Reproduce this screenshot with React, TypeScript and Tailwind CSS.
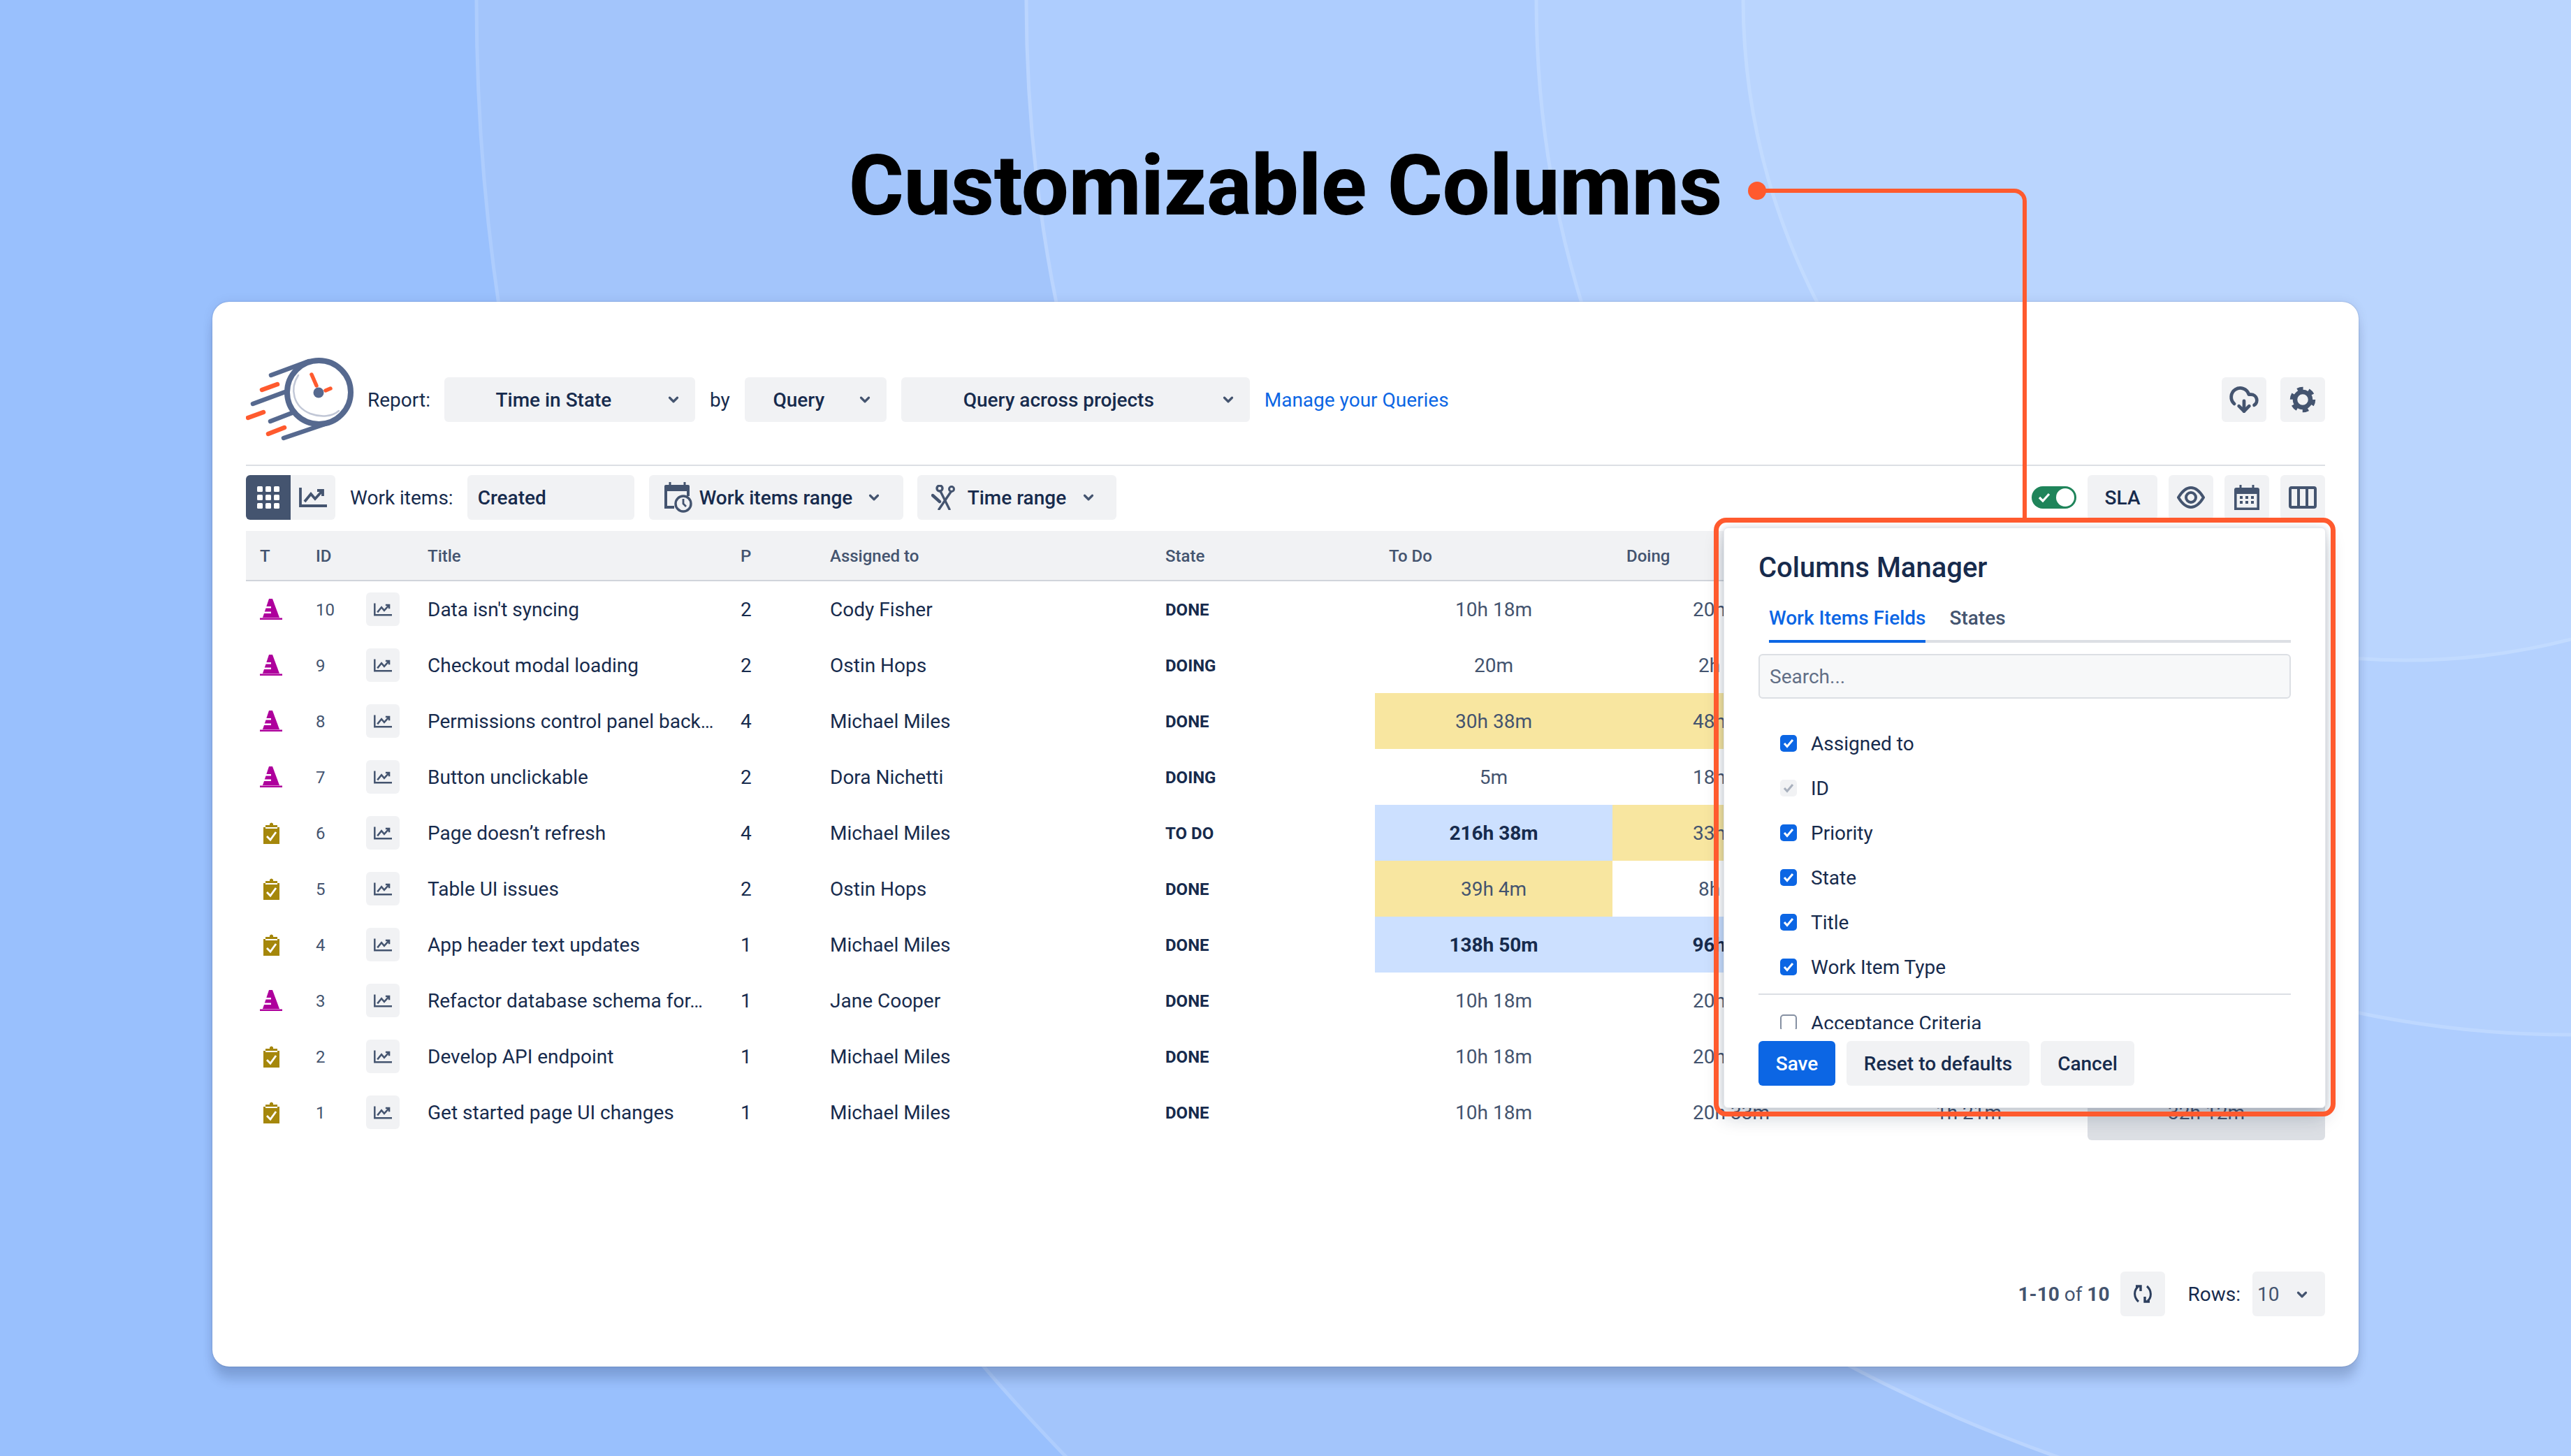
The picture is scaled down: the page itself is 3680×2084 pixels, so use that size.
import { ChevronDown, CloudDownload } from 'lucide-react';

interface Row {
  id: number;
  type: 'bug' | 'task';
  title: string;
  priority: number;
  assignee: string;
  state: string;
  toDo: string;
  doing: string;
  toDoTone?: 'yellow' | 'blue';
  doingTone?: 'yellow' | 'blue';
}

const rows: Row[] = [
  { id: 10, type: 'bug', title: "Data isn't syncing", priority: 2, assignee: 'Cody Fisher', state: 'DONE', toDo: '10h 18m', doing: '20h 33m' },
  { id: 9, type: 'bug', title: 'Checkout modal loading', priority: 2, assignee: 'Ostin Hops', state: 'DOING', toDo: '20m', doing: '2h 33m' },
  { id: 8, type: 'bug', title: 'Permissions control panel back…', priority: 4, assignee: 'Michael Miles', state: 'DONE', toDo: '30h 38m', doing: '48h 33m', toDoTone: 'yellow', doingTone: 'yellow' },
  { id: 7, type: 'bug', title: 'Button unclickable', priority: 2, assignee: 'Dora Nichetti', state: 'DOING', toDo: '5m', doing: '18h 33m' },
  { id: 6, type: 'task', title: 'Page doesn’t refresh', priority: 4, assignee: 'Michael Miles', state: 'TO DO', toDo: '216h 38m', doing: '33h 33m', toDoTone: 'blue', doingTone: 'yellow' },
  { id: 5, type: 'task', title: 'Table UI issues', priority: 2, assignee: 'Ostin Hops', state: 'DONE', toDo: '39h 4m', doing: '8h 33m', toDoTone: 'yellow' },
  { id: 4, type: 'task', title: 'App header text updates', priority: 1, assignee: 'Michael Miles', state: 'DONE', toDo: '138h 50m', doing: '96h 33m', toDoTone: 'blue', doingTone: 'blue' },
  { id: 3, type: 'bug', title: 'Refactor database schema for…', priority: 1, assignee: 'Jane Cooper', state: 'DONE', toDo: '10h 18m', doing: '20h 33m' },
  { id: 2, type: 'task', title: 'Develop API endpoint', priority: 1, assignee: 'Michael Miles', state: 'DONE', toDo: '10h 18m', doing: '20h 33m' },
  { id: 1, type: 'task', title: 'Get started page UI changes', priority: 1, assignee: 'Michael Miles', state: 'DONE', toDo: '10h 18m', doing: '20h 33m' },
];

const fields = [
  { label: 'Assigned to', mode: 'on' },
  { label: 'ID', mode: 'locked' },
  { label: 'Priority', mode: 'on' },
  { label: 'State', mode: 'on' },
  { label: 'Title', mode: 'on' },
  { label: 'Work Item Type', mode: 'on' },
];

const gridCols = 'grid grid-cols-[80px_72px_88px_448px_128px_480px_320px_340px_340px_340px_340px]';

function toneClass(tone?: 'yellow' | 'blue') {
  if (tone === 'yellow') return 'bg-[#f8e6a0] text-[#44546f]';
  if (tone === 'blue') return 'bg-[#cce0ff] text-[#172b4d] font-bold';
  return 'text-[#44546f]';
}

function Logo() {
  return (
    <svg width="154" height="120" viewBox="0 0 154 120" fill="none" strokeLinecap="round">
      <g stroke="#56698f" strokeWidth="6.5">
        <path d="M36 25 L90 5" />
        <path d="M10 66 L56 49" />
        <path d="M35 91 L66 79" />
        <path d="M54 115 L116 94" />
      </g>
      <g stroke="#ff5a2e" strokeWidth="6.5">
        <path d="M23 46 L45 38" />
        <path d="M3 86 L25 78" />
        <path d="M32 109 L55 100" />
      </g>
      <circle cx="104.5" cy="49.5" r="45.5" fill="#fff" stroke="#56698f" strokeWidth="8" />
      <path d="M75 25 C62 45 68 70 92 80 C108 86 124 84 133 76" stroke="#c1c7d6" strokeWidth="2.5" />
      <path d="M94 24 L101 40" stroke="#ff5a2e" strokeWidth="5.5" />
      <path d="M114 47 L121 44" stroke="#ff5a2e" strokeWidth="5.5" />
      <circle cx="104" cy="50" r="7.5" fill="#56698f" />
    </svg>
  );
}

function TrendIcon({ className }: { className: string }) {
  return (
    <svg className={className} viewBox="0 0 40 28" fill="none" stroke="#44546f" strokeWidth="3.8">
      <path d="M2 0 V26 H40" />
      <path d="M8 20 L17 9 L23 16 L33 5" />
      <path d="M26 4 H34 V12" />
    </svg>
  );
}

function DotsIcon() {
  return (
    <svg width="32" height="32" viewBox="0 0 32 32" fill="#fff">
      {[0, 12, 24].map((y) =>
        [0, 12, 24].map((x) => <rect key={`${x}-${y}`} x={x} y={y} width="8" height="8" rx="1.5" />)
      )}
    </svg>
  );
}

function CalendarClockIcon() {
  return (
    <svg width="40" height="44" viewBox="0 0 40 44" fill="none">
      <path d="M8 0 V6 M29 0 V6" stroke="#44546f" strokeWidth="3" />
      <path d="M2 4 H34 Q36 4 36 6 V13 H0 V6 Q0 4 2 4 Z" fill="#44546f" />
      <path d="M2 12 V36 H14" stroke="#44546f" strokeWidth="4" />
      <path d="M34 12 V20" stroke="#44546f" strokeWidth="4" />
      <circle cx="27" cy="31" r="11" fill="#f1f2f4" stroke="#44546f" strokeWidth="3.4" />
      <path d="M27 24 V31 L31 35" stroke="#44546f" strokeWidth="2.8" />
    </svg>
  );
}

function ToolsIcon() {
  return (
    <svg width="35" height="36" viewBox="0 0 35 36" fill="none" stroke="#44546f" strokeWidth="3.4" strokeLinecap="round">
      <circle cx="12" cy="5" r="4" />
      <circle cx="29" cy="6" r="3.5" strokeWidth="3" />
      <path d="M13 9 L26 35" />
      <path d="M28 10 L11 35" />
      <path d="M2 15 L12 24" strokeWidth="4.4" />
    </svg>
  );
}

function GearIcon() {
  return (
    <svg width="38" height="38" viewBox="0 0 38 38" fill="none" stroke="#44546f">
      <circle cx="19" cy="19" r="11" strokeWidth="6.5" />
      <circle cx="19" cy="19" r="15.5" strokeWidth="5.5" strokeDasharray="8.2 8.03" />
    </svg>
  );
}

function EyeIcon() {
  return (
    <svg width="40" height="32" viewBox="0 0 40 32" fill="none" stroke="#44546f">
      <path d="M2 16 C8 6 14 2 20 2 C26 2 32 6 38 16 C32 26 26 30 20 30 C14 30 8 26 2 16 Z" strokeWidth="4" />
      <circle cx="20" cy="16" r="7" strokeWidth="4" />
    </svg>
  );
}

function CalendarIcon() {
  return (
    <svg width="36" height="36" viewBox="0 0 36 36" fill="none">
      <path d="M9 0 V6 M27 0 V6" stroke="#44546f" strokeWidth="3" />
      <path d="M3 4 H33 Q36 4 36 7 V13 H0 V7 Q0 4 3 4 Z" fill="#44546f" />
      <path d="M1.800 11 V34.200 H34.200 V11" stroke="#44546f" strokeWidth="3.6" />
      <g fill="#44546f">
        {[16, 23].map((y) => [8, 16, 24].map((x) => <rect key={`${x}-${y}`} x={x} y={y} width="4" height="4" />))}
      </g>
    </svg>
  );
}

function ColumnsIcon() {
  return (
    <svg width="40" height="32" viewBox="0 0 40 32" fill="none" stroke="#44546f" strokeWidth="4">
      <rect x="2" y="2" width="36" height="28" rx="2" />
      <path d="M14 2 V30 M26 2 V30" />
    </svg>
  );
}

function BugCone() {
  return (
    <svg width="32" height="30" viewBox="0 0 32 30">
      <path d="M13 0 H18 L28 27 H4 Z" fill="#ae009c" />
      <rect x="0" y="27.500" width="32" height="2.500" fill="#ae009c" />
      <rect x="8" y="11" width="8" height="2.500" fill="#fff" />
      <rect x="6" y="18.500" width="10" height="2.500" fill="#fff" />
    </svg>
  );
}

function TaskClip() {
  return (
    <svg width="23" height="31" viewBox="0 0 23 31">
      <path d="M9 4 V2 Q11.500 -1 14 2 V4 H20 V7 H23 V31 H0 V7 H3 V4 Z" fill="#a5870b" />
      <rect x="3" y="7" width="17" height="2" fill="#fff" />
      <path d="M5 20 L10 25 L18 14" fill="none" stroke="#fff" strokeWidth="2.800" />
    </svg>
  );
}

function RefreshIcon() {
  return (
    <svg width="26" height="26" viewBox="0 0 26 26" fill="none" stroke="#2c3e5d" strokeWidth="3">
      <path d="M6 3 C0 8 0 18 7 24" />
      <path d="M20 23 C26 18 26 8 19 2" />
      <path d="M3 2 H10 V9" strokeWidth="3.4" />
      <path d="M23 24 H16 V17" strokeWidth="3.4" />
    </svg>
  );
}

function Field({ label, mode }: { label: string; mode: string }) {
  return (
    <div className="flex h-16 shrink-0 items-center gap-5 pl-[31px] text-[28px] text-[#172b4d]">
      {mode === 'off' ? (
        <span className="h-6 w-6 rounded-[5px] border-2 border-[#8590a2]" />
      ) : (
        <span className={`flex h-6 w-6 items-center justify-center rounded-[5px] ${mode === 'on' ? 'bg-[#0c66e4]' : 'bg-[#f1f2f4]'}`}>
          <svg width="16" height="14" viewBox="0 0 16 14" fill="none" stroke={mode === 'on' ? '#fff' : '#a8b0bd'} strokeWidth="3">
            <path d="M2 7 L6 11.500 L14 2" />
          </svg>
        </span>
      )}
      <span className="pt-[2px]">{label}</span>
    </div>
  );
}

function ColumnsManager() {
  return (
    <div className="absolute left-[2163px] top-[323px] flex h-[831px] w-[862px] flex-col rounded-[6px] border border-[#e6e8ec] bg-white px-[49px] pt-[32px] shadow-[0_12px_28px_rgba(9,30,66,0.22),0_0_6px_rgba(9,30,66,0.12)]">
      <h2 className="h-12 pt-[1px] text-[40px] leading-[48px] font-medium text-[#172b4d]">Columns Manager</h2>
      <div className="mt-4 ml-[15px] flex h-[68px] gap-[34px] border-b-4 border-[#dcdfe4] text-[28px] font-medium">
        <span className="-mb-1 h-[68px] border-b-4 border-[#0c66e4] pt-[14px] leading-[38px] text-[#0c66e4]">Work Items Fields</span>
        <span className="pt-[14px] leading-[38px] text-[#44546f]">States</span>
      </div>
      <div className="mt-4 flex h-16 shrink-0 items-center rounded-[6px] border-2 border-[#dcdfe4] bg-[#f7f8f9] px-[14px] pt-[2px] text-[28px] text-[#626f86]">Search...</div>
      <div className="mt-8 h-[441px] shrink-0 overflow-hidden">
        {fields.map((f) => (
          <Field key={f.label} label={f.label} mode={f.mode} />
        ))}
        <div className="mt-[6px] mb-2 h-[2px] bg-[#dcdfe4]" />
        <Field label="Acceptance Criteria" mode="off" />
      </div>
      <div className="mt-[17px] flex gap-4 text-[28px] font-medium">
        <button className="flex h-16 w-[110px] items-center justify-center rounded-[6px] bg-[#0c66e4] pt-[2px] text-white">Save</button>
        <button className="flex h-16 w-[262px] items-center justify-center rounded-[6px] bg-[#f1f2f4] pt-[2px] text-[#172b4d]">Reset to defaults</button>
        <button className="flex h-16 w-[134px] items-center justify-center rounded-[6px] bg-[#f1f2f4] pt-[2px] text-[#172b4d]">Cancel</button>
      </div>
    </div>
  );
}

export default function App() {
  return (
    <div className="relative h-[2084px] w-[3680px] overflow-hidden bg-[#99c0fd] font-[Roboto,sans-serif] text-[#172b4d]">
      <svg className="absolute inset-0" width="3680" height="2084" viewBox="0 0 3680 2084" fill="none">
        <circle cx="3680" cy="0" r="2998" fill="#a3c5fb" stroke="#aecdfd" strokeWidth="5" />
        <circle cx="3680" cy="0" r="2211" fill="#aecdfe" stroke="#bbd5fe" strokeWidth="5" />
        <circle cx="3680" cy="0" r="1481" fill="#b4d1fe" stroke="#bed8ff" strokeWidth="5" />
        <circle cx="3443" cy="-3" r="948" fill="#bad5fe" stroke="#c2dbff" strokeWidth="5" />
      </svg>

      <div className="relative flex h-[432px] justify-center pt-[198px]">
        <h1 className="text-[120px] leading-[136px] font-extrabold text-black">Customizable Columns</h1>
      </div>

      <div className="relative ml-[304px] h-[1524px] w-[3072px] rounded-[24px] bg-white px-[48px] pt-[80px] shadow-[0_20px_16px_-2px_rgba(9,30,66,0.18),0_0_16px_rgba(9,30,66,0.08),0_0_2px_rgba(9,30,66,0.25)]">
        <div className="flex h-[120px] items-center text-[28px]">
          <Logo />
          <span className="ml-5 pt-[2px]">Report:</span>
          <div className="ml-5 flex h-16 w-[359px] items-center rounded-[6px] bg-[#f1f2f4] pr-5 font-medium">
            <span className="flex-1 pt-[2px] pr-1 text-center">Time in State</span>
            <ChevronDown size={22} strokeWidth={3.5} color="#44546f" />
          </div>
          <span className="ml-[21px] pt-[2px]">by</span>
          <div className="ml-[21px] flex h-16 w-[203px] items-center rounded-[6px] bg-[#f1f2f4] pr-5 font-medium">
            <span className="flex-1 pt-[2px] pr-[6px] text-center">Query</span>
            <ChevronDown size={22} strokeWidth={3.5} color="#44546f" />
          </div>
          <div className="ml-[21px] flex h-16 w-[499px] items-center rounded-[6px] bg-[#f1f2f4] pr-5 font-medium">
            <span className="flex-1 pt-[2px] pr-[6px] text-center">Query across projects</span>
            <ChevronDown size={22} strokeWidth={3.5} color="#44546f" />
          </div>
          <a className="ml-[21px] pt-[2px] text-[#0c66e4]">Manage your Queries</a>
          <div className="ml-auto flex gap-5">
            <div className="flex h-16 w-16 items-center justify-center rounded-[6px] bg-[#f1f2f4]">
              <CloudDownload size={44} strokeWidth={2.6} color="#44546f" />
            </div>
            <div className="flex h-16 w-16 items-center justify-center rounded-[6px] bg-[#f1f2f4]">
              <GearIcon />
            </div>
          </div>
        </div>

        <div className="mt-[33px] h-[2px] bg-[#dcdfe4]" />

        <div className="mt-[13px] flex h-16 items-center text-[28px]">
          <div className="flex h-16 w-16 items-center justify-center rounded-l-[6px] bg-[#44546f]">
            <DotsIcon />
          </div>
          <div className="flex h-16 w-16 items-center justify-center rounded-r-[6px] bg-[#f1f2f4]">
            <TrendIcon className="h-7 w-10" />
          </div>
          <span className="ml-[21px] pt-[2px]">Work items:</span>
          <div className="ml-5 flex h-16 w-[239px] items-center rounded-[6px] bg-[#f1f2f4] pt-[2px] pl-[15px] font-medium">Created</div>
          <div className="ml-[21px] flex h-16 w-[364px] items-center gap-[10px] rounded-[6px] bg-[#f1f2f4] pl-[22px] font-medium">
            <CalendarClockIcon />
            <span className="pt-[2px]">Work items range</span>
            <ChevronDown className="ml-[10px]" size={22} strokeWidth={3.5} color="#44546f" />
          </div>
          <div className="ml-5 flex h-16 w-[285px] items-center gap-[17px] rounded-[6px] bg-[#f1f2f4] pl-5 font-medium">
            <ToolsIcon />
            <span className="pt-[2px]">Time range</span>
            <ChevronDown className="ml-1" size={22} strokeWidth={3.5} color="#44546f" />
          </div>
          <div className="ml-auto flex items-center gap-4">
            <div className="flex h-8 w-16 items-center justify-between rounded-full bg-[#1f845a] pr-[3px] pl-[9px]">
              <svg width="18" height="14" viewBox="0 0 18 14" fill="none" stroke="#fff" strokeWidth="3.200">
                <path d="M2 7 L7 12 L16 2" />
              </svg>
              <span className="h-[26px] w-[26px] rounded-full bg-white" />
            </div>
            <div className="flex h-16 w-[100px] items-center justify-center rounded-[6px] bg-[#f1f2f4] pt-[2px] font-medium">SLA</div>
            <div className="flex h-16 w-16 items-center justify-center rounded-[6px] bg-[#f1f2f4]">
              <EyeIcon />
            </div>
            <div className="flex h-16 w-16 items-center justify-center rounded-[6px] bg-[#f1f2f4]">
              <CalendarIcon />
            </div>
            <div className="flex h-16 w-16 items-center justify-center rounded-[6px] bg-[#f1f2f4]">
              <ColumnsIcon />
            </div>
          </div>
        </div>

        <div className="mt-4">
          <div className={`${gridCols} h-[72px] items-center border-b-2 border-[#d0d4db] bg-[#f1f2f4] pt-[2px] text-[24px] font-medium text-[#44546f]`}>
            <span className="pl-5">T</span>
            <span className="pl-5">ID</span>
            <span />
            <span className="pl-5">Title</span>
            <span className="pl-5">P</span>
            <span className="pl-5">Assigned to</span>
            <span className="pl-5">State</span>
            <span className="pl-5">To Do</span>
            <span className="pl-5">Doing</span>
          </div>
          {rows.map((r, i) => (
            <div key={r.id} className={`${gridCols} h-20 items-center text-[28px]`}>
              <span className="flex pl-5">{r.type === 'bug' ? <BugCone /> : <span className="pl-[5px]"><TaskClip /></span>}</span>
              <span className="pt-[2px] pl-5 text-[24px] text-[#44546f]">{r.id}</span>
              <span className="pl-5">
                <span className="flex h-12 w-12 items-center justify-center rounded-[6px] bg-[#f1f2f4]">
                  <TrendIcon className="h-[19px] w-[26px]" />
                </span>
              </span>
              <span className="whitespace-nowrap pt-[2px] pl-5">{r.title}</span>
              <span className="pt-[2px] pl-5">{r.priority}</span>
              <span className="pt-[2px] pl-5">{r.assignee}</span>
              <span className="pt-[2px] pl-5 text-[24px] font-bold">{r.state}</span>
              <span className={`flex h-20 items-center justify-center pt-[2px] ${toneClass(r.toDoTone)}`}>{r.toDo}</span>
              <span className={`flex h-20 items-center justify-center pt-[2px] ${toneClass(r.doingTone)}`}>{r.doing}</span>
              <span className="flex h-20 items-center justify-center pt-[2px] text-[#44546f]">{i === 9 ? '1h 21m' : ''}</span>
              <span className={`flex h-20 items-center justify-center rounded-b-[6px] pt-[2px] text-[#44546f] ${i === 9 ? 'bg-[#dcdfe4]' : ''}`}>{i === 9 ? '32h 12m' : ''}</span>
            </div>
          ))}
        </div>

        <div className="mt-[188px] flex h-16 items-center justify-end text-[28px]">
          <span className="pt-[2px] text-[#44546f]">
            <b className="font-bold">1-10</b> of <b className="font-bold">10</b>
          </span>
          <div className="ml-[15px] flex h-16 w-16 items-center justify-center rounded-[6px] bg-[#f1f2f4]">
            <RefreshIcon />
          </div>
          <span className="ml-[33px] pt-[2px]">Rows:</span>
          <div className="ml-[17px] flex h-16 w-[104px] items-center justify-between rounded-[6px] bg-[#f1f2f4] pt-[2px] pr-[22px] pl-[7px] text-[#44546f]">
            <span>10</span>
            <ChevronDown size={22} strokeWidth={3.5} color="#44546f" />
          </div>
        </div>

        <ColumnsManager />
      </div>

      <div className="absolute top-[270px] left-[2515px] h-[471px] w-[386px] rounded-tr-[18px] border-t-[6px] border-r-[6px] border-[#ff5a2e]" />
      <div className="absolute top-[260px] left-[2502px] h-[26px] w-[26px] rounded-full bg-[#ff5a2e]" />
      <div className="absolute top-[741px] left-[2453px] h-[857px] w-[890px] rounded-[18px] border-[7px] border-[#ff5a2e]" />
    </div>
  );
}
